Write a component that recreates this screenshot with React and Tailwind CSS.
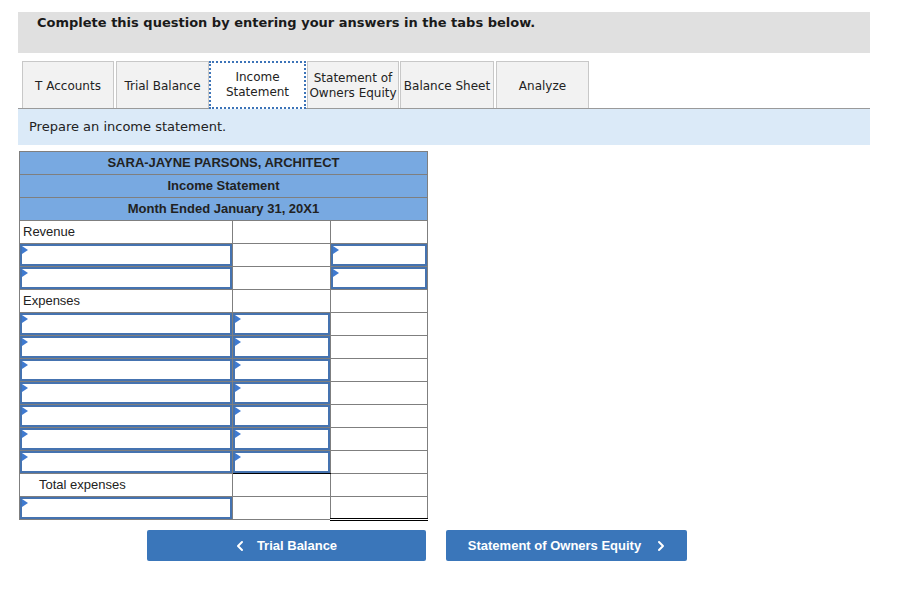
import { ChevronLeft, ChevronRight } from "lucide-react"

const tabs = [
  { label: "T Accounts", cls: "ml-[4px] w-[92px]" },
  { label: "Trial Balance", cls: "ml-[2px] w-[93px]" },
  { label: ["Income", "Statement"], cls: "w-[97px]", active: true },
  { label: ["Statement of", "Owners Equity"], cls: "ml-[1px] w-[92px]" },
  { label: "Balance Sheet", cls: "ml-[1px] w-[94px]" },
  { label: "Analyze", cls: "ml-[2px] w-[93px]" },
]

function Marker() {
  return (
    <span className="absolute left-0 top-0 w-0 h-0 border-y-[4px] border-y-transparent border-l-[6px] border-l-[#3f7ad0]" />
  )
}

function InputCell({ under }) {
  return (
    <td className={`h-[23px] p-0 border border-[#7f7f7f] ${under ? "border-b-black" : ""}`}>
      <div className="relative h-[22px] border-2 border-[#4573b0]">
        <Marker />
      </div>
    </td>
  )
}

function Cell({ children, className = "" }) {
  return (
    <td className={`h-[23px] p-0 px-[3px] border border-[#7f7f7f] text-[13px] text-[#222] ${className}`}>
      {children}
    </td>
  )
}

export default function App() {
  const expenseRows = [0, 1, 2, 3, 4, 5, 6]

  return (
    <div className="w-[923px] h-[597px] bg-white pl-[18px] pt-[12px]" style={{ fontFamily: "'DejaVu Sans', Verdana, sans-serif" }}>
      <div className="w-[852px] h-[41px] bg-[#e0e0e0] pl-[19px] pt-[1px]">
        <p className="text-[13px] font-bold text-[#1a1a1a]">Complete this question by entering your answers in the tabs below.</p>
      </div>

      <div className="mt-[8px] w-[852px] flex border-b border-[#9a9a9a]">
        {tabs.map((t, i) => (
          <div
            key={i}
            className={`flex flex-col items-center justify-center text-[12px] leading-[15px] text-[#222] ${t.cls} ${
              t.active ? "bg-white border-2 border-dotted border-[#3d74b8] -mb-[1px] h-[48px]" : "h-[47px] pt-[2px] bg-[#f2f2f2] border border-b-0 border-[#c8c8c8]"
            }`}
          >
            {Array.isArray(t.label) ? t.label.map((l) => <span key={l}>{l}</span>) : <span>{t.label}</span>}
          </div>
        ))}
      </div>

      <div className="w-[852px] h-[36px] bg-[#dbeaf8] pl-[11px] flex items-center">
        <p className="text-[13px] text-[#222]">Prepare an income statement.</p>
      </div>

      <div className="mt-[6px] ml-[1px]" style={{ fontFamily: "'Liberation Sans', Arial, sans-serif" }}>
        <table className="border-collapse w-[408px] table-fixed">
          <colgroup>
            <col className="w-[213px]" />
            <col className="w-[98px]" />
            <col className="w-[97px]" />
          </colgroup>
          <tbody>
            {["SARA-JAYNE PARSONS, ARCHITECT", "Income Statement", "Month Ended January 31, 20X1"].map((h) => (
              <tr key={h}>
                <td colSpan={3} className="h-[23px] p-0 bg-[#78a9e1] border border-[#7f7f7f] text-center text-[13px] font-bold text-[#222]">
                  {h}
                </td>
              </tr>
            ))}
            <tr>
              <Cell>Revenue</Cell>
              <Cell />
              <Cell />
            </tr>
            {[0, 1].map((r) => (
              <tr key={"rev" + r}>
                <InputCell />
                <Cell />
                <InputCell />
              </tr>
            ))}
            <tr>
              <Cell>Expenses</Cell>
              <Cell />
              <Cell />
            </tr>
            {expenseRows.map((r) => (
              <tr key={"exp" + r}>
                <InputCell />
                <InputCell under={r === 6} />
                <Cell />
              </tr>
            ))}
            <tr>
              <Cell className="pl-[19px]">Total expenses</Cell>
              <Cell />
              <Cell className="border-b-black" />
            </tr>
            <tr>
              <InputCell />
              <Cell />
              <Cell className="border-b-[3px] border-b-black border-double" />
            </tr>
          </tbody>
        </table>
      </div>

      <div className="mt-[9px] flex gap-[20px] pl-[129px]" style={{ fontFamily: "'Liberation Sans', Arial, sans-serif" }}>
        <button className="w-[279px] h-[31px] bg-[#3a76ba] rounded-[2px] text-white text-[13px] font-bold flex items-center justify-center gap-[9px] pr-[4px]">
          <ChevronLeft size={16} strokeWidth={3} />
          <span>Trial Balance</span>
        </button>
        <button className="w-[241px] h-[31px] bg-[#3a76ba] rounded-[2px] text-white text-[13px] font-bold flex items-center justify-center gap-[12px] pl-[4px]">
          <span>Statement of Owners Equity</span>
          <ChevronRight size={16} strokeWidth={3} />
        </button>
      </div>
    </div>
  )
}
